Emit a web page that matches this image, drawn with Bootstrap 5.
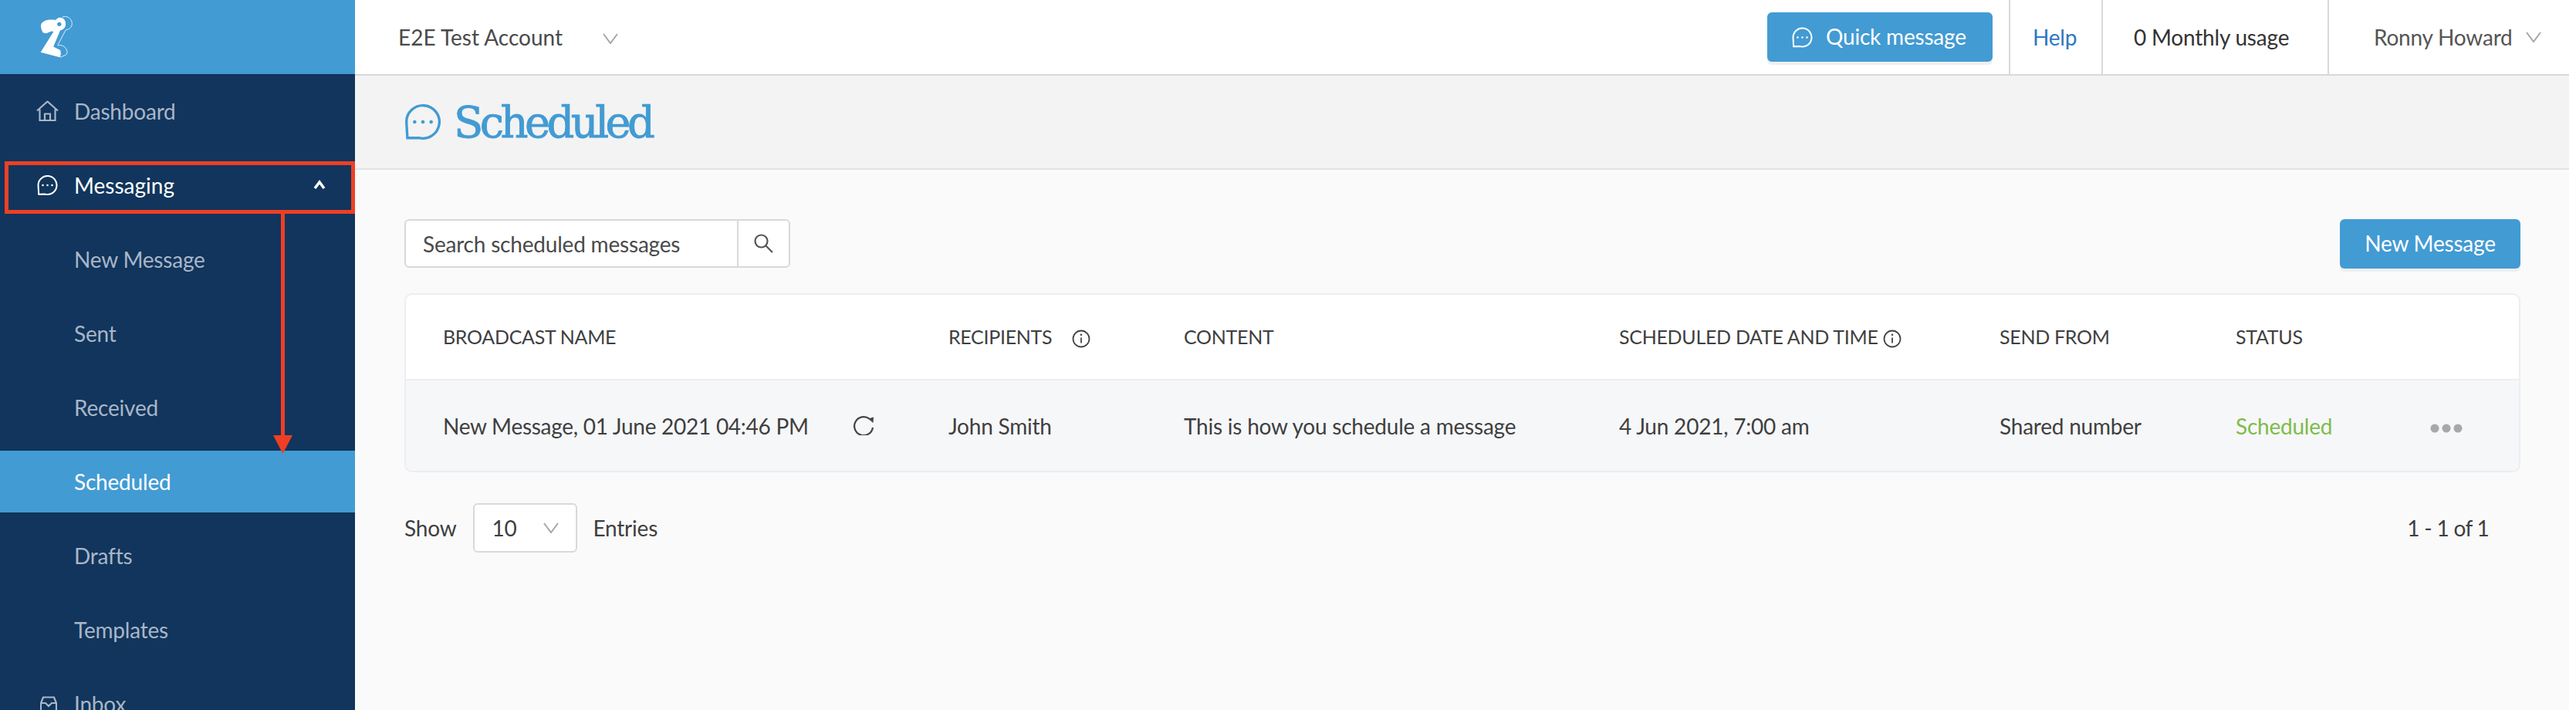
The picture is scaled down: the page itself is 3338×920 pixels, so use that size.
<!DOCTYPE html>
<html lang="en">
<head>
<meta charset="utf-8">
<title>Scheduled</title>
<link rel="stylesheet" href="https://cdn.jsdelivr.net/npm/bootstrap@5.3.0/dist/css/bootstrap.min.css">
<style>
html,body{height:100%;overflow:hidden}
body{font-family:"Lato","Liberation Sans",sans-serif;font-size:28px;letter-spacing:-.2px;color:#3f3f3f;background:#fafafa}
.app-shell{height:920px;position:relative}
.side-rail{width:460px;flex:none;background:#11355c;overflow:hidden}
.brand-box{height:96px;background:#429bd3;padding-left:52px}
.side-link{height:96px;padding-left:96px;color:#a9b6c8;text-decoration:none;position:relative;display:flex;align-items:center}
.side-ico{position:absolute;left:47px;top:50%;transform:translateY(-50%)}
.ico-inbox{left:52px;margin-top:4px}
.ico-msg{left:48px}
.side-link.is-white{color:#fff;letter-spacing:0}
.side-link.is-active{background:#429bd3;color:#fff;height:80px;margin:8px 0}
.side-caret{position:absolute;left:406px;top:50%;margin-top:-8px}
.main-col{min-width:0}
.top-bar{height:98px;background:#fff;border-bottom:2px solid #d9d9d9;flex:none}
.acct-name{margin-left:56px;color:#4a4a4a;letter-spacing:0}
.acct-caret{margin-left:52px;margin-top:4px}
.btn-sky{background:#429bd3;border:0;color:#fff;font-size:28px;letter-spacing:-.2px;border-radius:6px;box-shadow:0 4px 0 #efefef;line-height:1.2}
.btn-quick{width:292px;height:64px;padding:0 0 0 32px;margin-right:21px;gap:17px}
.top-cell{height:96px;border-left:2px solid #d9d9d9;display:flex;align-items:center;text-decoration:none}
.cell-help{width:120px;padding-left:29px;color:#2f78c0}
.cell-usage{width:293px;padding-left:40px;color:#333}
.cell-user{width:313px;padding-left:58px;color:#555;gap:17px}
.head-band{height:122px;background:#f3f3f3;border-bottom:2px solid #e2e2e2;padding-left:64px;gap:16px;flex:none}
.page-title{font-family:"DejaVu Serif","Liberation Serif",serif;font-size:56px;color:#429bd3;margin:2px 0 0;font-weight:400;letter-spacing:-4.600px;line-height:1;-webkit-text-stroke:.9px #429bd3}
.work-area{padding:64px 63px 0 64px}
.search-box{width:500px;height:63px;border:2px solid #d9d9d9;border-radius:6px;background:#fff;overflow:hidden}
.search-text{padding-left:22px;width:431px;height:100%;border-right:2px solid #d9d9d9;color:#4a4a4a}
.btn-new{width:234px;height:64px;padding:0}
.data-card{margin-top:32px;border:2px solid #eceef2;border-radius:10px;background:#fff;overflow:hidden;height:232px}
.data-table{table-layout:fixed;width:100%;margin:0;border-collapse:collapse}
.data-table th,.data-table td{padding:0;vertical-align:middle;border:0;background:transparent;box-shadow:none;color:#3f3f3f}
.data-table th{height:110px;font-size:25px;font-weight:400;letter-spacing:-.3px;border-bottom:2px solid #eceef2;white-space:nowrap}
.data-table td{height:118px;background:#f6f7f9;white-space:nowrap;letter-spacing:-.22px}
.data-table th:first-child,.data-table td:first-child{padding-left:48px}
.data-table td:first-child{letter-spacing:-.27px}
.w-a{width:703px}.w-b{width:305px}.w-c{width:564px}.w-d{width:493px}.w-e{width:306px}.w-f{width:252px}
.name-gap{gap:58px}
.info-gap{margin-left:20px}
.state-ok{color:#7ebc4a!important}
.foot-row{margin-top:40px;height:64px;padding-right:41px}
.page-select{width:135px;height:64px;border:2px solid #d9d9d9;border-radius:6px;background:#fff;margin:0 20px 0 22px;padding:0 22px 0 22px}
.page-count{letter-spacing:-.7px}
.ann-box{position:absolute;left:6px;top:209px;width:454px;height:68px;border:5px solid #ee3f24;pointer-events:none}
.ann-line{position:absolute;left:364px;top:277px;width:5px;height:288px;background:#ee3f24}
.ann-head{position:absolute;left:354px;top:564px}
.scroll-strip{width:9px;flex:none;background:#fff}
</style>
</head>
<body>
<div class="app-shell d-flex">
  <aside class="side-rail">
    <div class="brand-box d-flex align-items-center">
      <svg width="42" height="54" viewBox="153 57 127 163" aria-hidden="true">
        <path fill="#fff" d="M157 88C165 72 190 68 212 72L225 63C240 58 255 70 253 90C252 103 243 110 232 112L205 176L232 190C236 200 234 212 230 218L155 198L205 118C200 112 190 118 178 124L165 122C158 112 154 100 157 88Z"/>
        <circle cx="228" cy="88" r="8" fill="#429bd3"/>
        <path fill="none" stroke="#fff" stroke-width="2.500" d="M240 60C260 52 278 68 278 86C278 100 266 110 254 110L222 170M222 172C238 166 254 178 258 192C260 200 258 206 254 208L232 218"/>
      </svg>
    </div>
    <a class="side-link" href="#">
      <svg class="side-ico" width="29" height="27" viewBox="0 0 29 27" fill="none" stroke="#a9b6c8" stroke-width="2.200"><path d="M1 13 14.500 1 28 13M4.500 11V25.500H24.500V11M11 25.500V17H18V25.500"/></svg>
      Dashboard</a>
    <a class="side-link is-white" href="#">
      <svg class="side-ico ico-msg" width="27" height="27" viewBox="0 0 27 27" fill="none" stroke="#fff" stroke-width="2"><path d="M2.200 25.200 1.500 13.500A12 12 0 1 1 10.500 25.100Z"/><circle cx="7.500" cy="13.500" r="1.300" fill="#fff" stroke="none"/><circle cx="13.500" cy="13.500" r="1.300" fill="#fff" stroke="none"/><circle cx="19.500" cy="13.500" r="1.300" fill="#fff" stroke="none"/></svg>
      Messaging
      <svg class="side-caret" width="16" height="14" viewBox="0 0 16 14" fill="none" stroke="#fff" stroke-width="3.500"><path d="m2 12 6-8 6 8"/></svg>
    </a>
    <a class="side-link" href="#">New Message</a>
    <a class="side-link" href="#">Sent</a>
    <a class="side-link" href="#">Received</a>
    <a class="side-link is-active" href="#">Scheduled</a>
    <a class="side-link" href="#">Drafts</a>
    <a class="side-link" href="#">Templates</a>
    <a class="side-link" href="#">
      <svg class="side-ico ico-inbox" width="22" height="28" viewBox="0 0 22 28" fill="none" stroke="#a9b6c8" stroke-width="2.200"><path d="M1 9 4 1.500H18L21 9V27H1ZM1 9H7L11 13 15 9H21"/></svg>
      Inbox</a>
  </aside>
  <div class="main-col flex-grow-1 d-flex flex-column">
    <header class="top-bar d-flex align-items-center">
      <span class="acct-name">E2E Test Account</span>
      <svg class="acct-caret" width="20" height="14" viewBox="0 0 20 14" fill="none" stroke="#a6a6a6" stroke-width="2"><path d="m1 1 9 12 9-12"/></svg>
      <div class="ms-auto d-flex align-items-center">
        <button class="btn btn-sky btn-quick d-flex align-items-center" type="button">
          <svg width="27" height="27" viewBox="0 0 27 27" fill="none" stroke="#fff" stroke-width="2"><path d="M2.200 25.200 1.500 13.500A12 12 0 1 1 10.500 25.100Z"/><circle cx="7.500" cy="13.500" r="1.300" fill="#fff" stroke="none"/><circle cx="13.500" cy="13.500" r="1.300" fill="#fff" stroke="none"/><circle cx="19.500" cy="13.500" r="1.300" fill="#fff" stroke="none"/></svg>
          Quick message
        </button>
        <a class="top-cell cell-help" href="#">Help</a>
        <div class="top-cell cell-usage">0 Monthly usage</div>
        <div class="top-cell cell-user">Ronny Howard
          <svg width="20" height="14" viewBox="0 0 20 14" fill="none" stroke="#a6a6a6" stroke-width="2"><path d="m1 1 9 12 9-12"/></svg>
        </div>
      </div>
    </header>
    <div class="head-band d-flex align-items-center">
      <svg width="48" height="48" viewBox="0 0 27 27" fill="none" stroke="#429bd3" stroke-width="1.900"><path d="M2.200 25.200 1.500 13.500A12 12 0 1 1 10.500 25.100Z"/><circle cx="7.500" cy="13.500" r="1.300" fill="#429bd3" stroke="none"/><circle cx="13.500" cy="13.500" r="1.300" fill="#429bd3" stroke="none"/><circle cx="19.500" cy="13.500" r="1.300" fill="#429bd3" stroke="none"/></svg>
      <h1 class="page-title">Scheduled</h1>
    </div>
    <main class="work-area flex-grow-1">
      <div class="d-flex justify-content-between">
        <div class="search-box d-flex align-items-center">
          <div class="search-text d-flex align-items-center">Search scheduled messages</div>
          <div class="flex-grow-1 d-flex justify-content-center">
            <svg width="25" height="25" viewBox="0 0 25 25" fill="none" stroke="#555" stroke-width="2.200"><circle cx="9.500" cy="9.500" r="8"/><path d="m15 15 9 9"/></svg>
          </div>
        </div>
        <button class="btn btn-sky btn-new" type="button">New Message</button>
      </div>
      <div class="data-card">
        <table class="table data-table">
          <colgroup><col class="w-a"><col class="w-b"><col class="w-c"><col class="w-d"><col class="w-e"><col class="w-f"><col></colgroup>
          <thead>
            <tr>
              <th>BROADCAST NAME</th>
              <th>RECIPIENTS
                <svg class="info-gap align-middle" width="24" height="24" viewBox="0 0 24 24" fill="none" stroke="#444" stroke-width="1.800"><circle cx="12" cy="12" r="10.500"/><path d="M12 10.500v7"/><circle cx="12" cy="6.800" r="1.300" fill="#444" stroke="none"/></svg></th>
              <th>CONTENT</th>
              <th>SCHEDULED DATE AND TIME
                <svg class="align-middle" width="24" height="24" viewBox="0 0 24 24" fill="none" stroke="#444" stroke-width="1.800"><circle cx="12" cy="12" r="10.500"/><path d="M12 10.500v7"/><circle cx="12" cy="6.800" r="1.300" fill="#444" stroke="none"/></svg></th>
              <th>SEND FROM</th>
              <th>STATUS</th>
              <th></th>
            </tr>
          </thead>
          <tbody>
            <tr>
              <td><div class="d-flex align-items-center name-gap">New Message, 01 June 2021 04:46 PM
                <svg width="26" height="25" viewBox="0 0 26 25" fill="none" stroke="#444" stroke-width="2.200"><path d="M20.500 3.700A12 12 0 1 0 25 15"/><path fill="#444" stroke="none" d="M19 3.500 26 1.500 25.500 9Z"/></svg></div></td>
              <td>John Smith</td>
              <td>This is how you schedule a message</td>
              <td>4 Jun 2021, 7:00 am</td>
              <td>Shared number</td>
              <td class="state-ok">Scheduled</td>
              <td><svg width="42" height="12" viewBox="0 0 42 12" fill="#a8a8a8"><circle cx="6" cy="6" r="5.500"/><circle cx="21" cy="6" r="5.500"/><circle cx="36" cy="6" r="5.500"/></svg></td>
            </tr>
          </tbody>
        </table>
      </div>
      <div class="foot-row d-flex align-items-center">
        <span>Show</span>
        <div class="page-select d-flex align-items-center justify-content-between">10
          <svg width="20" height="14" viewBox="0 0 20 14" fill="none" stroke="#a6a6a6" stroke-width="2"><path d="m1 1 9 12 9-12"/></svg>
        </div>
        <span>Entries</span>
        <span class="ms-auto page-count">1 - 1 of 1</span>
      </div>
    </main>
  </div>
  <div class="scroll-strip"></div>
  <div class="ann-box"></div>
  <div class="ann-line"></div>
  <svg class="ann-head" width="25" height="24" viewBox="0 0 25 24"><path fill="#ee3f24" d="M0 0h25L12.500 24z"/></svg>
</div>
</body>
</html>
